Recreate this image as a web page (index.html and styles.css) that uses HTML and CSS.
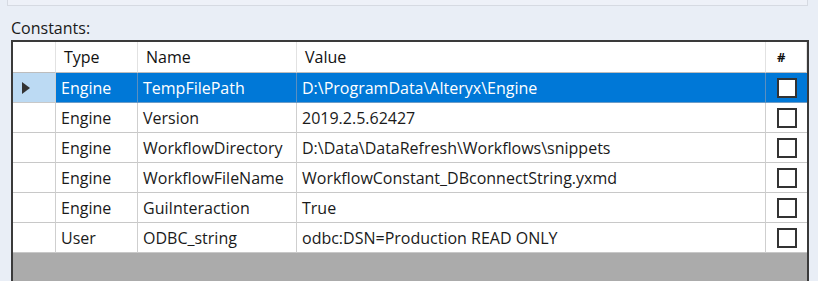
FILE: index.html
```html
<!DOCTYPE html>
<html>
<head>
<meta charset="utf-8">
<link rel="stylesheet" href="styles.css">
</head>
<body>
<div class="top-panel"></div>
<div class="label">Constants:</div>
<div class="grid">
  <div class="cell hdr rh"></div>
  <div class="cell hdr">Type</div>
  <div class="cell hdr">Name</div>
  <div class="cell hdr">Value</div>
  <div class="cell hdr hash">#</div>

  <div class="cell rh current"><span class="tri"></span></div>
  <div class="cell sel">Engine</div>
  <div class="cell sel">TempFilePath</div>
  <div class="cell sel">D:\ProgramData\Alteryx\Engine</div>
  <div class="cell sel chk"><span class="box"></span></div>

  <div class="cell rh"></div>
  <div class="cell">Engine</div>
  <div class="cell">Version</div>
  <div class="cell">2019.2.5.62427</div>
  <div class="cell chk"><span class="box"></span></div>

  <div class="cell rh"></div>
  <div class="cell">Engine</div>
  <div class="cell">WorkflowDirectory</div>
  <div class="cell">D:\Data\DataRefresh\Workflows\snippets</div>
  <div class="cell chk"><span class="box"></span></div>

  <div class="cell rh"></div>
  <div class="cell">Engine</div>
  <div class="cell">WorkflowFileName</div>
  <div class="cell">WorkflowConstant_DBconnectString.yxmd</div>
  <div class="cell chk"><span class="box"></span></div>

  <div class="cell rh"></div>
  <div class="cell">Engine</div>
  <div class="cell">GuiInteraction</div>
  <div class="cell">True</div>
  <div class="cell chk"><span class="box"></span></div>

  <div class="cell rh"></div>
  <div class="cell">User</div>
  <div class="cell">ODBC_string</div>
  <div class="cell">odbc:DSN=Production READ ONLY</div>
  <div class="cell chk"><span class="box"></span></div>

  <div class="empty"></div>
</div>
</body>
</html>
```

FILE: styles.css
```css
html, body {
  margin: 0;
  padding: 0;
}
body {
  background: #e9eef6;
  font-family: "Open Sans", "Noto Sans", sans-serif;
  font-size: 16px;
  color: #1a1a1a;
  width: 818px;
  height: 281px;
  overflow: hidden;
}
.top-panel {
  margin: 0 10px 0 7px;
  height: 5px;
  background: #eef1f8;
  border: 1px solid #d6dae2;
  border-top: none;
}
.label {
  padding: 12px 0 0 11px;
  height: 22px;
  line-height: 20px;
}
.grid {
  margin-left: 11px;
  width: 798px;
  box-sizing: border-box;
  border: 2px solid #3a3a3a;
  border-bottom: none;
  display: grid;
  grid-template-columns: 43px 82px 159px 469px 1fr;
  grid-template-rows: 31px repeat(6, 30px) 60px;
  background: #ffffff;
}
.cell {
  box-sizing: border-box;
  border-right: 1px solid #cfcfcf;
  border-bottom: 1px solid #c8c8c8;
  padding-left: 5px;
  display: flex;
  align-items: center;
  white-space: nowrap;
  overflow: hidden;
}
.hdr {
  border-right-color: #e2e2e2;
  border-bottom-color: #bdbdbd;
  padding-left: 8px;
  color: #111;
}
.hash {
  padding-left: 11px;
  font-size: 13px;
  font-weight: bold;
}
.rh {
  padding-left: 0;
}
.current {
  background: #bcdaf3;
}
.tri {
  margin-left: 9px;
  width: 0;
  height: 0;
  border-top: 6px solid transparent;
  border-bottom: 6px solid transparent;
  border-left: 8px solid #333;
}
.sel {
  background: #0078d7;
  color: #ffffff;
  border-right-color: #5a8fc0;
  border-bottom-color: #6d9cc7;
}
.chk {
  border-right: none;
  padding-left: 0;
  justify-content: center;
}
.box {
  width: 20px;
  height: 20px;
  box-sizing: border-box;
  border: 2px solid #333;
  background: #fff;
  margin-left: 1px;
}
.empty {
  grid-column: 1 / -1;
  background: #ababab;
}
```
